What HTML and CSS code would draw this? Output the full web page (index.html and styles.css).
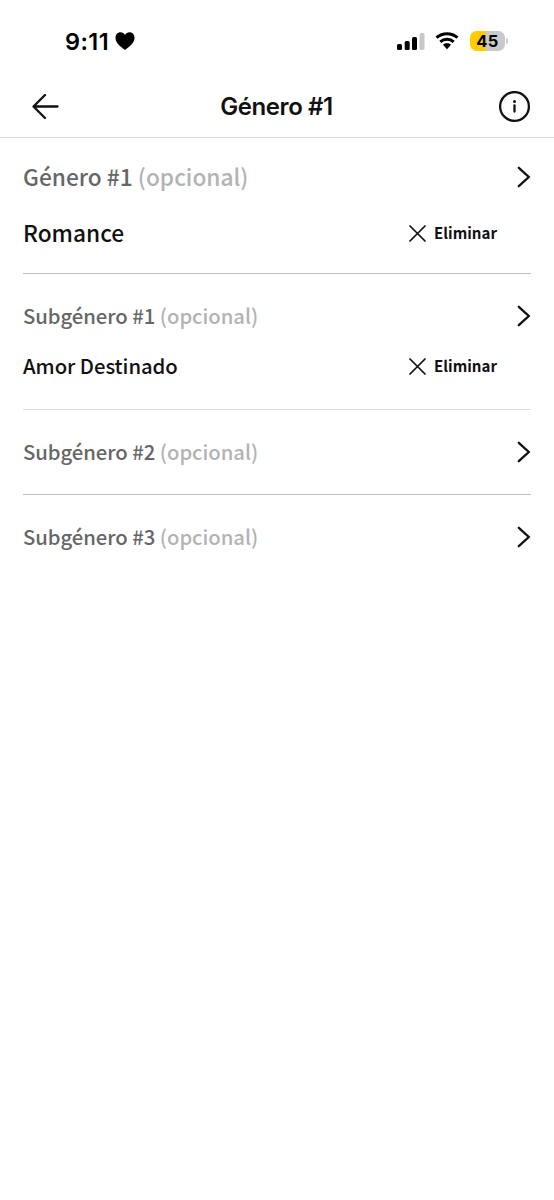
FILE: index.html
```html
<!DOCTYPE html>
<html lang="es">
<head>
<meta charset="utf-8">
<title>Género #1</title>
<link rel="stylesheet" href="styles.css">
</head>
<body>
<svg width="0" height="0" class="defs">
  <symbol id="chevron" viewBox="0 0 14 22"><path d="M1.800 1.800 11.800 11 1.800 20.200"/></symbol>
  <symbol id="cross" viewBox="0 0 17 17"><path d="M1 1 16 16M16 1 1 16"/></symbol>
</svg>
<div class="status">
  <div class="time"><span>9:11</span>
    <svg class="heart" width="20" height="18" viewBox="0 0 20 18"><path d="M10 18C6 15.200.5 11.200.5 5.800.5 2.500 2.700.3 5.500.3 7.500.3 9 1.300 10 3 11 1.300 12.500.3 14.500.3 17.300.3 19.500 2.500 19.500 5.800 19.500 11.200 14 15.200 10 18Z"/></svg>
  </div>
  <div class="indicators">
    <svg width="28" height="18" viewBox="0 0 28 18"><rect x="0" y="12" width="5" height="6" rx="1.500"/><rect x="7.700" y="9" width="5" height="9" rx="1.500"/><rect x="15" y="5" width="5" height="13" rx="1.500"/><rect x="22.500" y="1" width="5" height="17" rx="1.500" fill="#c8c8c8"/></svg>
    <svg class="wifi" width="24" height="18" viewBox="0 0 24 18"><path d="M1.500 5.700C7.500.3 16.500.3 22.500 5.700M5.300 9.800C9.200 6.300 14.800 6.300 18.700 9.800" fill="none" stroke="#000" stroke-width="3"/><path d="M8 12.700C10.300 10.800 13.700 10.800 16 12.700L12 17.200Z"/></svg>
    <div class="battery"><span>45</span></div>
    <i class="nub"></i>
  </div>
</div>
<header class="nav">
  <svg class="line" width="28" height="26" viewBox="0 0 28 26"><path d="M25.500 12.500H1.700M13 1 1.500 12.500 13 24"/></svg>
  <h1>Género #1</h1>
  <svg class="line info" width="32" height="32" viewBox="0 0 32 32"><circle cx="15.500" cy="15.500" r="14.400"/><path d="M15.500 14.500V20.500"/><circle class="dot" cx="15.500" cy="10.500" r="1.500"/></svg>
</header>
<main>
  <section class="group main-genre">
    <div class="row"><p class="label">Género #1 <span>(opcional)</span></p><svg class="chevron"><use href="#chevron"/></svg></div>
    <div class="row value"><p>Romance</p><button><svg class="cross"><use href="#cross"/></svg><span>Eliminar</span></button></div>
  </section>
  <section class="group sub selected">
    <div class="row"><p class="label">Subgénero #1 <span>(opcional)</span></p><svg class="chevron"><use href="#chevron"/></svg></div>
    <div class="row value"><p>Amor Destinado</p><button><svg class="cross"><use href="#cross"/></svg><span>Eliminar</span></button></div>
  </section>
  <section class="group sub">
    <div class="row"><p class="label">Subgénero #2 <span>(opcional)</span></p><svg class="chevron"><use href="#chevron"/></svg></div>
  </section>
  <section class="group sub last">
    <div class="row"><p class="label">Subgénero #3 <span>(opcional)</span></p><svg class="chevron"><use href="#chevron"/></svg></div>
  </section>
</main>
</body>
</html>
```
FILE: styles.css
```css
* { box-sizing: border-box; }
body { margin: 0; min-height: 1200px; background: #fff; color: #111; font-family: "Noto Sans CJK SC", "Noto Sans", sans-serif; }
h1, p { margin: 0; }
.defs { display: block; height: 0; }
.status { height: 76px; padding: 6px 46px 0 65px; display: flex; align-items: center; justify-content: space-between; font-family: Inter, sans-serif; color: #000; }
.time { display: flex; align-items: center; gap: 6px; font-size: 23.500px; font-weight: 600; letter-spacing: 0.4px; }
.indicators { display: flex; align-items: center; }
.wifi { margin-left: 10px; }
.battery { width: 35px; height: 20px; margin-left: 11px; border-radius: 6.500px; background: linear-gradient(90deg, #fc0 45%, #c9c9c9 45%); display: flex; align-items: center; justify-content: center; font-size: 16.500px; font-weight: 700; line-height: 20px; letter-spacing: 0.4px; }
.nub { width: 2px; height: 6px; margin-left: 1px; border-radius: 0 2px 2px 0; background: #ccc; }
.nav { height: 62px; padding: 0 23px 0 32px; border-bottom: 1px solid #dcdcdc; display: grid; grid-template-columns: 32px 1fr 32px; align-items: center; }
.nav h1 { padding-right: 10px; font-family: Inter, sans-serif; font-size: 24px; font-weight: 600; line-height: 30px; text-align: center; letter-spacing: -0.400px; color: #111; }
.line { fill: none; stroke: #111; stroke-width: 2.300; stroke-linecap: round; stroke-linejoin: round; }
.dot { fill: #111; stroke: none; }
main { padding: 0 23px; }
.group { border-bottom: 1px solid #bdbdbd; }
.row { display: flex; align-items: center; justify-content: space-between; height: 36px; line-height: 36px; font-size: 20.300px; font-weight: 500; white-space: nowrap; }
.row p { height: 36px; }
.label { color: #666; }
.label span { color: #b3b3b3; }
.chevron { width: 14px; height: 22px; fill: none; stroke: #111; stroke-width: 2.300; stroke-linecap: round; }
.main-genre { height: 136px; padding-top: 21px; }
.main-genre .row { font-size: 22.700px; }
.main-genre .value { margin-top: 20px; }
.sub { height: 85px; padding-top: 24px; }
.sub .row { line-height: 34px; letter-spacing: -0.05px; }
.sub .value { line-height: 32px; }
.selected { height: 136px; border-color: #dedede; }
.selected .value { margin-top: 15px; }
.selected button { padding-bottom: 2px; }
.last { border: 0; }
.value { padding-right: 34px; }
button { display: flex; align-items: center; gap: 8.500px; padding: 0; border: 0; background: none; color: #111; font: 700 15.100px/24px "Noto Sans CJK SC", "Noto Sans", sans-serif; }
button span { line-height: 22px; height: 24px; }
.cross { width: 17px; height: 17px; fill: none; stroke: #111; stroke-width: 1.700; stroke-linecap: round; }
```
